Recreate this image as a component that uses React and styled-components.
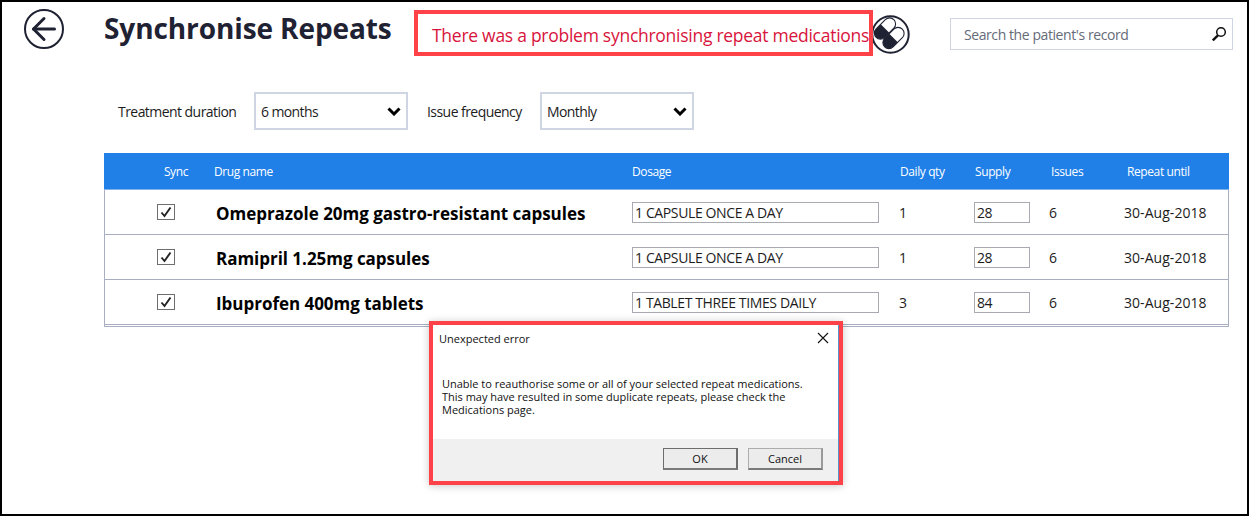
import React from "react";
import styled, { createGlobalStyle } from "styled-components";
import { ArrowLeft } from "lucide-react";

const GlobalStyle = createGlobalStyle`
  html, body {
    margin: 0;
    padding: 0;
    background: #fff;
  }
  * {
    box-sizing: border-box;
  }
  body {
    font-family: "Open Sans", "Noto Sans", "Liberation Sans", sans-serif;
    color: #1f2233;
  }
`;

const Page = styled.div`
  position: relative;
  width: 1249px;
  height: 516px;
  overflow: hidden;
  border: 2px solid #000;
  background: #fff;
`;

const Header = styled.header`
  display: flex;
  align-items: flex-start;
  height: 90px;
  padding: 7px 14px 0 22px;
`;

const BackButton = styled.div`
  width: 40px;
  height: 40px;
  border: 2px solid #1f2233;
  border-radius: 50%;
  display: flex;
  align-items: center;
  justify-content: center;
  color: #1f2233;
`;

const Title = styled.h1`
  margin: 1px 0 0 40px;
  width: 310px;
  font-size: 28px;
  line-height: 36px;
  font-weight: 700;
  letter-spacing: -0.1px;
  white-space: nowrap;
  color: #1f2233;
`;

const Banner = styled.div`
  position: relative;
  z-index: 1;
  width: 459px;
  height: 46px;
  margin-top: 1px;
  padding: 3px 0 0 14px;
  border: 4px solid #ff4248;
  display: flex;
  align-items: center;
  font-size: 17.5px;
  letter-spacing: -0.27px;
  white-space: nowrap;
  color: #d8143c;
`;

const PillBadge = styled.div`
  width: 39px;
  height: 39px;
  margin: 6px 0 0 -2px;
  flex: none;
`;

const Search = styled.div`
  width: 283px;
  height: 32px;
  margin: 9px 0 0 40px;
  padding: 0 5px 0 13px;
  border: 1px solid #d0d5e3;
  display: flex;
  align-items: center;
  justify-content: space-between;
  font-size: 14px;
  letter-spacing: -0.42px;
  color: #666b78;
`;

const Filters = styled.div`
  display: flex;
  align-items: center;
  height: 38px;
  padding-left: 116px;
`;

const FilterLabel = styled.span`
  font-size: 14px;
  letter-spacing: -0.55px;
  color: #1c1c1c;
  white-space: nowrap;
  width: ${(p) => p.$width}px;
`;

const Select = styled.div`
  width: 154px;
  height: 38px;
  margin-right: 19px;
  padding: 0 5px 0 5px;
  border: 2px solid #d0d5e3;
  display: flex;
  align-items: center;
  justify-content: space-between;
  font-size: 14px;
  letter-spacing: -0.6px;
  color: #1c1c1c;
`;

const Table = styled.div`
  width: 1125px;
  margin: 23px 0 0 102px;
  padding-bottom: 1px;
  border-left: 1px solid #a9afc0;
  border-right: 1px solid #a9afc0;
  border-bottom: 1px solid #a9afc0;
`;

const HeadRow = styled.div`
  display: grid;
  grid-template-columns: 110px 418px 268px 75px 76px 76px 1fr;
  align-items: center;
  height: 37px;
  margin: 0 -1px;
  background: #2080e8;
  border-bottom: 1px solid #7fb2ea;
  color: #fff;
  font-size: 12px;
  letter-spacing: -0.4px;
`;

const SyncHead = styled.span`
  justify-self: end;
  margin-right: 26px;
`;

const Row = styled.div`
  display: grid;
  grid-template-columns: 109px 418px 267px 75px 75px 75px 1fr;
  align-items: center;
  height: 45px;
  border-bottom: 1px solid #a9afc0;
  font-size: 14px;
  letter-spacing: -0.38px;
  color: #1c1c1c;
`;

const CheckCell = styled.div`
  justify-self: end;
  margin-right: 39px;
  width: 18px;
  height: 16px;
  border: 1px solid #6e6e6e;
  display: flex;
  align-items: center;
  justify-content: center;
`;

const DrugName = styled.div`
  padding: 3px 0 0 2px;
  font-size: 17px;
  font-weight: 700;
  letter-spacing: -0.03px;
  color: #000;
  white-space: nowrap;
`;

const TextField = styled.input`
  display: block;
  height: 21px;
  width: ${(p) => p.$width}px;
  padding: 0 2px;
  border: 1px solid #a9a9b4;
  background: #fff;
  font: inherit;
  letter-spacing: inherit;
  color: #1c1c1c;
  outline: none;
`;

const RepeatDate = styled.span`
  letter-spacing: 0.05px;
  white-space: nowrap;
`;

const Dialog = styled.div`
  position: absolute;
  left: 427px;
  top: 319px;
  width: 414px;
  height: 164px;
  border: 4px solid #ff4248;
  box-shadow: 0 1px 8px rgba(0, 0, 0, 0.22);
  display: flex;
  flex-direction: column;
  background: #fff;
  color: #111;
`;

const DialogInner = styled.div`
  flex: 1;
  display: flex;
  flex-direction: column;
  border-right: 1px solid #5b93cf;
`;

const DialogTitleBar = styled.div`
  display: flex;
  align-items: center;
  justify-content: space-between;
  height: 26px;
  padding: 0 9px 0 6px;
  font-size: 11px;
  letter-spacing: 0;
`;

const DialogBody = styled.div`
  flex: 1;
  padding: 26px 8px 0 9px;
  font-size: 11px;
  line-height: 13px;
  letter-spacing: -0.01px;
`;

const DialogFooter = styled.div`
  height: 42px;
  display: flex;
  align-items: center;
  justify-content: flex-end;
  gap: 10px;
  padding: 0 15px 2px 0;
  background: #f0f0f0;
`;

const DialogButton = styled.button`
  width: 75px;
  height: 22px;
  padding: 0;
  border: 1px solid ${(p) => (p.$primary ? "#6d6d6d" : "#adadad")};
  border-bottom: 2px solid #7a7a7a;
  border-right: 2px solid ${(p) => (p.$primary ? "#6d6d6d" : "#9a9a9a")};
  background: #ececec;
  font-family: inherit;
  font-size: 11px;
  letter-spacing: 0;
  color: #111;
`;

const Check = () => (
  <svg width="12" height="12" viewBox="0 0 12 12" fill="none">
    <path d="M1.5 6.5 L4.5 10 L10.5 1.5" stroke="#222" strokeWidth="1.9" />
  </svg>
);

const Chevron = () => (
  <svg width="14" height="9" viewBox="0 0 14 9" fill="none">
    <path d="M1.5 1.5 L7 7 L12.5 1.5" stroke="#000" strokeWidth="3" />
  </svg>
);

const Magnifier = () => (
  <svg width="16" height="16" viewBox="0 0 16 16" fill="none">
    <circle cx="10" cy="6" r="4.3" stroke="#111" strokeWidth="1.5" />
    <path d="M6.9 9.3 L1.8 14.4" stroke="#111" strokeWidth="2.4" />
  </svg>
);

const CloseMark = () => (
  <svg width="12" height="12" viewBox="0 0 12 12" fill="none">
    <path d="M1 1 L11 11 M11 1 L1 11" stroke="#111" strokeWidth="1.1" />
  </svg>
);

const Capsule = ({ x, y }) => (
  <g transform={`translate(${x} ${y}) rotate(-45)`}>
    <rect x="-12.5" y="-6" width="25" height="12" rx="6" fill="#fff" stroke="#1f2233" strokeWidth="1.1" />
    <path d="M0 -6 H-6.5 A6 6 0 0 0 -6.5 6 H0 Z" fill="#1f2233" />
  </g>
);

const PillIcon = () => (
  <svg width="39" height="39" viewBox="0 0 39 39">
    <circle cx="19.5" cy="19.5" r="18.2" fill="#fff" stroke="#1f2233" strokeWidth="2" />
    <Capsule x={14} y={13.5} />
    <Capsule x={22.5} y={23} />
  </svg>
);

const drugs = [
  { name: "Omeprazole 20mg gastro-resistant capsules", dosage: "1 CAPSULE ONCE A DAY", qty: 1, supply: 28 },
  { name: "Ramipril 1.25mg capsules", dosage: "1 CAPSULE ONCE A DAY", qty: 1, supply: 28 },
  { name: "Ibuprofen 400mg tablets", dosage: "1 TABLET THREE TIMES DAILY", qty: 3, supply: 84 },
];

export default function App() {
  return (
    <>
      <GlobalStyle />
      <Page>
        <Header>
          <BackButton>
            <ArrowLeft size={36} strokeWidth={2} />
          </BackButton>
          <Title>Synchronise Repeats</Title>
          <Banner>There was a problem synchronising repeat medications</Banner>
          <PillBadge>
            <PillIcon />
          </PillBadge>
          <Search>
            <span>Search the patient's record</span>
            <Magnifier />
          </Search>
        </Header>

        <Filters>
          <FilterLabel $width={136}>Treatment duration</FilterLabel>
          <Select>
            <span>6 months</span>
            <Chevron />
          </Select>
          <FilterLabel $width={113}>Issue frequency</FilterLabel>
          <Select>
            <span>Monthly</span>
            <Chevron />
          </Select>
        </Filters>

        <Table>
          <HeadRow>
            <SyncHead>Sync</SyncHead>
            <span>Drug name</span>
            <span>Dosage</span>
            <span>Daily qty</span>
            <span>Supply</span>
            <span>Issues</span>
            <span>Repeat until</span>
          </HeadRow>
          {drugs.map((drug) => (
            <Row key={drug.name}>
              <CheckCell>
                <Check />
              </CheckCell>
              <DrugName>{drug.name}</DrugName>
              <TextField $width={247} readOnly value={drug.dosage} />
              <span>{drug.qty}</span>
              <TextField $width={56} readOnly value={drug.supply} />
              <span>6</span>
              <RepeatDate>30-Aug-2018</RepeatDate>
            </Row>
          ))}
        </Table>

        <Dialog>
          <DialogInner>
            <DialogTitleBar>
              <span>Unexpected error</span>
              <CloseMark />
            </DialogTitleBar>
            <DialogBody>
              Unable to reauthorise some or all of your selected repeat medications.
              <br />
              This may have resulted in some duplicate repeats, please check the
              <br />
              Medications page.
            </DialogBody>
            <DialogFooter>
              <DialogButton $primary>OK</DialogButton>
              <DialogButton>Cancel</DialogButton>
            </DialogFooter>
          </DialogInner>
        </Dialog>
      </Page>
    </>
  );
}
